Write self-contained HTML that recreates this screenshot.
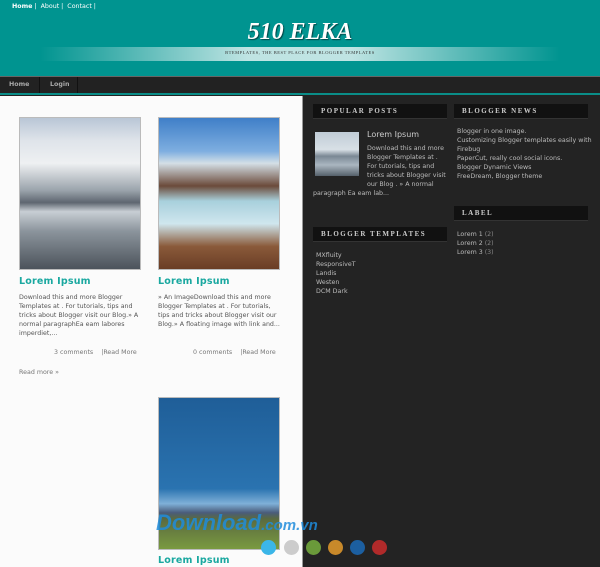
<!DOCTYPE html>
<html><head><style>
*{margin:0;padding:0;box-sizing:border-box}
body{width:600px;height:567px;overflow:hidden;background:#232323;font-family:"DejaVu Sans","Liberation Sans",sans-serif;position:relative}
.a{position:absolute}
.t{font-size:6.3px;color:#555;line-height:9px}
.s{font-size:6.3px;color:#bbb;line-height:9px}
.h{background:#111;color:#ccc;font-family:"Liberation Serif",serif;font-size:7px;font-weight:bold;letter-spacing:1.5px;padding-left:8px;line-height:15px;height:15px;border-bottom:1px solid #333}
.lt{font-size:9.5px;font-weight:bold;color:#1aa8a0;letter-spacing:.2px}
</style></head><body>
<div class="a" style="left:0;top:0;width:600px;height:76px;background:#009490"></div>
<div class="a" style="left:12px;top:2px;font-size:6.3px;color:#fff;line-height:9px"><b>Home</b> | &nbsp;About | &nbsp;Contact |</div>
<div class="a" style="left:0;top:19px;width:600px;text-align:center;font-family:'Liberation Serif',serif;font-style:italic;font-weight:bold;font-size:24px;color:#fff;text-shadow:1px 1px 1px #044">510 ELKA</div>
<div class="a" style="left:40px;top:47px;width:520px;height:14px;background:linear-gradient(90deg,rgba(255,255,255,0),rgba(255,255,255,.75) 40%,rgba(255,255,255,.75) 60%,rgba(255,255,255,0))"></div>
<div class="a" style="left:0;top:50px;width:600px;text-align:center;font-family:'Liberation Serif',serif;font-size:4.5px;color:#333;letter-spacing:.5px">BTEMPLATES, THE BEST PLACE FOR BLOGGER TEMPLATES</div>
<div class="a" style="left:0;top:76px;width:600px;height:19px;background:#222;border-top:1px solid #666;border-bottom:2px solid #0a8d88"></div>
<div class="a" style="left:0;top:77px;width:40px;height:16px;border-right:1px solid #111;color:#aaa;font-size:6.3px;font-weight:bold;line-height:16px;padding-left:9px">Home</div>
<div class="a" style="left:40px;top:77px;width:38px;height:16px;border-right:1px solid #111;color:#aaa;font-size:6.3px;font-weight:bold;line-height:16px;padding-left:10px">Login</div>
<div class="a" style="left:0;top:96px;width:303px;height:471px;background:#fbfbfb;border-right:1px solid #999"></div>
<div class="a" style="left:19px;top:117px;width:122px;height:153px;border:1px solid #bbb;background:linear-gradient(180deg,#b9c6d6 0%,#dfe4ea 15%,#eef0f2 30%,#9aa3ab 48%,#5e6670 56%,#c8ced4 62%,#8b949c 75%,#4c535b 100%)"></div>
<div class="a" style="left:158px;top:117px;width:122px;height:153px;border:1px solid #bbb;background:linear-gradient(180deg,#3f7fc8 0%,#7eaee0 22%,#d4dfe6 30%,#6b4a3a 45%,#a8d0dc 55%,#cfe6ee 70%,#8a5a3a 85%,#6a3d25 100%)"></div>
<div class="a lt" style="left:19px;top:276px">Lorem Ipsum</div>
<div class="a lt" style="left:158px;top:276px">Lorem Ipsum</div>
<div class="a t" style="left:19px;top:293px;width:125px">Download this and more Blogger Templates at . For tutorials, tips and tricks about Blogger visit our Blog.» A normal paragraphEa eam labores imperdiet,...</div>
<div class="a t" style="left:158px;top:293px;width:125px">» An ImageDownload this and more Blogger Templates at . For tutorials, tips and tricks about Blogger visit our Blog.» A floating image with link and...</div>
<div class="a t" style="left:54px;top:348px;color:#777">3 comments &nbsp;&nbsp; |Read More</div>
<div class="a t" style="left:193px;top:348px;color:#777">0 comments &nbsp;&nbsp; |Read More</div>
<div class="a t" style="left:19px;top:368px;color:#777">Read more »</div>
<div class="a" style="left:158px;top:397px;width:122px;height:153px;border:1px solid #bbb;background:linear-gradient(180deg,#1f5e98 0%,#2a73b0 60%,#7fb0d8 70%,#4a5c7a 76%,#5a6a40 80%,#7a9a40 100%)"></div>
<div class="a lt" style="left:158px;top:555px">Lorem Ipsum</div>
<div class="a" style="left:156px;top:510px;font-family:'Liberation Sans',sans-serif;font-size:22px;font-weight:bold;font-style:italic;color:rgba(30,140,220,.85)">Download<span style="font-size:15px">.com.vn</span></div>
<div class="a" style="left:261px;top:540px;width:15px;height:15px;border-radius:50%;background:#3bb6e8"></div>
<div class="a" style="left:284px;top:540px;width:15px;height:15px;border-radius:50%;background:#ccc"></div>
<div class="a" style="left:306px;top:540px;width:15px;height:15px;border-radius:50%;background:#6a9a3a"></div>
<div class="a" style="left:328px;top:540px;width:15px;height:15px;border-radius:50%;background:#c8892a"></div>
<div class="a" style="left:350px;top:540px;width:15px;height:15px;border-radius:50%;background:#1c5fa0"></div>
<div class="a" style="left:372px;top:540px;width:15px;height:15px;border-radius:50%;background:#b02a2a"></div>
<div class="a h" style="left:313px;top:104px;width:134px">POPULAR POSTS</div>
<div class="a h" style="left:454px;top:104px;width:134px">BLOGGER NEWS</div>
<div class="a" style="left:315px;top:132px;width:44px;height:44px;background:linear-gradient(180deg,#c0ccd6,#d8e0e6 40%,#7a8894 55%,#aab6c0 75%,#55606a)"></div>
<div class="a" style="left:367px;top:130px;font-size:8px;color:#ccc">Lorem Ipsum</div>
<div class="a s" style="left:313px;top:144px;width:136px"><div style="padding-left:54px">Download this and more Blogger Templates at . For tutorials, tips and tricks about Blogger visit our Blog . » A normal</div>paragraph Ea eam lab...</div>
<div class="a s" style="left:457px;top:127px;width:135px">Blogger in one image.<br>Customizing Blogger templates easily with Firebug<br>PaperCut, really cool social icons.<br>Blogger Dynamic Views<br>FreeDream, Blogger theme</div>
<div class="a h" style="left:454px;top:206px;width:134px">LABEL</div>
<div class="a s" style="left:457px;top:230px">Lorem 1 <span style="color:#888">(2)</span><br>Lorem 2 <span style="color:#888">(2)</span><br>Lorem 3 <span style="color:#888">(3)</span></div>
<div class="a h" style="left:313px;top:227px;width:134px">BLOGGER TEMPLATES</div>
<div class="a s" style="left:316px;top:251px">MXfluity<br>ResponsiveT<br>Landis<br>Westen<br>DCM Dark</div>
</body></html>
